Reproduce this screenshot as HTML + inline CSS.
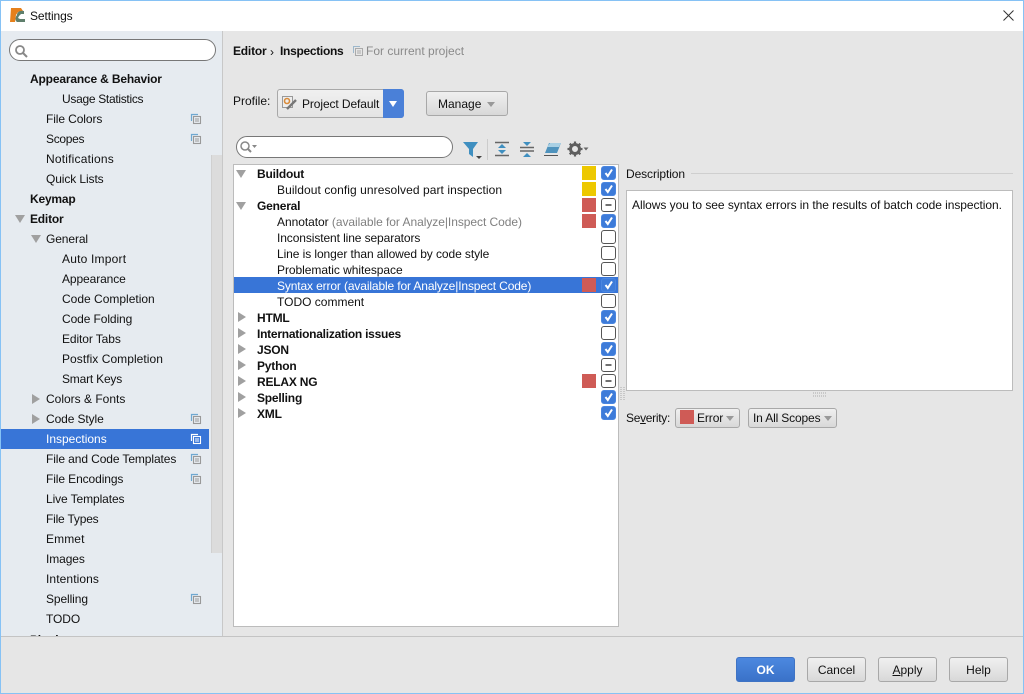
<!DOCTYPE html>
<html><head><meta charset="utf-8"><style>
html,body{margin:0;padding:0}
body{width:1024px;height:694px;position:relative;overflow:hidden;background:#e6e6e6;font-family:"Liberation Sans",sans-serif;font-size:12px;color:#111}
.a{position:absolute}
.t{position:absolute;white-space:nowrap;line-height:16px;height:16px;letter-spacing:-.1px}
.b{font-weight:bold;font-size:12px;letter-spacing:-.2px}
.s{position:absolute;width:14px;height:14px;left:582px}
.y{background:#edc800}.r{background:#cf5b56}
.c{position:absolute;left:601px;width:13px;height:12px;border:1px solid #555;border-radius:3px;background:#fff}
.c.on{background:#3d7bd9;border-color:#4a86e0}
.c svg{position:absolute;left:0;top:0}
.tri-d{position:absolute;width:0;height:0;border-left:5px solid transparent;border-right:5px solid transparent;border-top:8px solid #a0a0a0}
.tri-r{position:absolute;width:0;height:0;border-top:5px solid transparent;border-bottom:5px solid transparent;border-left:8px solid #a0a0a0}
.btn{position:absolute;box-sizing:border-box;border:1px solid #a8a8a8;border-radius:3px;background:linear-gradient(#f0f0f0,#d8d8d8);text-align:center;line-height:24px;color:#111}
.dd{position:absolute;width:0;height:0;border-left:4px solid transparent;border-right:4px solid transparent;border-top:5px solid #999}
u{text-decoration:underline}
</style></head><body>
<svg width="0" height="0" style="position:absolute"><defs>
<g id="cp"><path d="M1.500 8V1.500H8" fill="none" stroke="#6fa8d0" stroke-width="1.200"/><rect x="3.500" y="3.500" width="7" height="7" fill="#e6ebf0" stroke="#999" stroke-width="1.100"/><path d="M5 6h4M5 8h4" stroke="#999"/></g>
<path id="ck" d="M3.500 6L5.800 9L10 2.500" fill="none" stroke="#fff" stroke-width="2"/>
<path id="mn" d="M3.500 6H9.500" stroke="#111" stroke-width="1.200"/>
</defs></svg>

<!-- title bar -->
<div class="a" style="left:0;top:0;width:1024px;height:31px;background:#fff"></div>
<svg class="a" style="left:9px;top:7px" width="17" height="17" viewBox="0 0 17 17"><path d="M2 1h10l2 3-5 1-2 3-1 7H1z" fill="#e5801c"/><path d="M8 8c0-3 3-5 7-4v3h-3l-2 2-1 2 2 1h5v3H8c-2-1-2-5 0-7z" fill="#5f7f6c"/></svg>
<div class="t" style="left:30px;top:8px">Settings</div>
<svg class="a" style="left:1002px;top:9px" width="13" height="13"><path d="M1.500 1.500L11.500 11.500M11.500 1.500L1.500 11.500" stroke="#333" stroke-width="1"/></svg>

<!-- sidebar -->
<div class="a" style="left:1px;top:31px;width:221px;height:605px;background:#e6ebf0;overflow:hidden">
<div class="a" style="left:0;top:398px;width:208px;height:20px;background:#3875d7"></div>
<div class="a" style="left:210px;top:124px;width:10px;height:398px;background:#dcdcdc;border-left:1px solid #d0d0d0"></div>
<div class="t b" style="left:29px;top:601px">Plugins</div>
</div>
<div class="a" style="left:222px;top:31px;width:1px;height:605px;background:#c8c8c8"></div>
<div class="a" style="left:9px;top:39px;width:205px;height:20px;background:#fff;border:1px solid #777;border-radius:11px"></div>
<svg class="a" style="left:14px;top:44px" width="15" height="15"><circle cx="6" cy="6" r="4" fill="none" stroke="#888" stroke-width="1.800"/><path d="M9 9l4 4" stroke="#888" stroke-width="2"/></svg>

<div class="t b" style="left:30px;top:71px;letter-spacing:-.17px">Appearance &amp; Behavior</div>
<div class="t" style="left:62px;top:91px;letter-spacing:-.3px">Usage Statistics</div>
<div class="t" style="left:46px;top:111px">File Colors</div>
<div class="t" style="left:46px;top:131px;letter-spacing:-.3px">Scopes</div>
<div class="t" style="left:46px;top:151px;letter-spacing:.2px">Notifications</div>
<div class="t" style="left:46px;top:171px">Quick Lists</div>
<div class="t b" style="left:30px;top:191px">Keymap</div>
<div class="t b" style="left:30px;top:211px">Editor</div>
<div class="t" style="left:46px;top:231px">General</div>
<div class="t" style="left:62px;top:251px;letter-spacing:.2px">Auto Import</div>
<div class="t" style="left:62px;top:271px">Appearance</div>
<div class="t" style="left:62px;top:291px;letter-spacing:0">Code Completion</div>
<div class="t" style="left:62px;top:311px">Code Folding</div>
<div class="t" style="left:62px;top:331px">Editor Tabs</div>
<div class="t" style="left:62px;top:351px;letter-spacing:.05px">Postfix Completion</div>
<div class="t" style="left:62px;top:371px;letter-spacing:-.2px">Smart Keys</div>
<div class="t" style="left:46px;top:391px;letter-spacing:0">Colors &amp; Fonts</div>
<div class="t" style="left:46px;top:411px">Code Style</div>
<div class="t" style="left:46px;top:431px;color:#fff;letter-spacing:0">Inspections</div>
<div class="t" style="left:46px;top:451px">File and Code Templates</div>
<div class="t" style="left:46px;top:471px">File Encodings</div>
<div class="t" style="left:46px;top:491px">Live Templates</div>
<div class="t" style="left:46px;top:511px;letter-spacing:-.2px">File Types</div>
<div class="t" style="left:46px;top:531px;letter-spacing:.1px">Emmet</div>
<div class="t" style="left:46px;top:551px">Images</div>
<div class="t" style="left:46px;top:571px;letter-spacing:.1px">Intentions</div>
<div class="t" style="left:46px;top:591px">Spelling</div>
<div class="t" style="left:46px;top:611px">TODO</div>
<div class="tri-d" style="left:15px;top:215px"></div>
<div class="tri-d" style="left:31px;top:235px"></div>
<div class="tri-r" style="left:32px;top:394px"></div>
<div class="tri-r" style="left:32px;top:414px"></div>
<svg class="a" style="left:190px;top:113px" width="12" height="12"><use href="#cp"/></svg>
<svg class="a" style="left:190px;top:133px" width="12" height="12"><use href="#cp"/></svg>
<svg class="a" style="left:190px;top:413px" width="12" height="12"><use href="#cp"/></svg>
<svg class="a" style="left:190px;top:433px" width="12" height="12"><path d="M1.500 8V1.500H8" fill="none" stroke="#fff" stroke-width="1.200"/><rect x="3.500" y="3.500" width="7" height="7" fill="#3875d7" stroke="#fff" stroke-width="1.100"/><path d="M5 6h4M5 8h4" stroke="#fff"/></svg>
<svg class="a" style="left:190px;top:453px" width="12" height="12"><use href="#cp"/></svg>
<svg class="a" style="left:190px;top:473px" width="12" height="12"><use href="#cp"/></svg>
<svg class="a" style="left:190px;top:593px" width="12" height="12"><use href="#cp"/></svg>

<!-- header -->
<div class="t b" style="left:233px;top:43px">Editor</div>
<div class="t" style="left:270px;top:44px">›</div>
<div class="t b" style="left:280px;top:43px;letter-spacing:-.3px">Inspections</div>
<svg class="a" style="left:352px;top:45px" width="12" height="12"><path d="M1.500 8V1.500H8" fill="none" stroke="#9db8cc" stroke-width="1"/><rect x="3.500" y="3.500" width="7" height="7" fill="none" stroke="#aaa"/><path d="M5 6h4M5 8h4" stroke="#aaa"/></svg>
<div class="t" style="left:366px;top:43px;color:#8a8a8a;letter-spacing:0">For current project</div>

<!-- profile -->
<div class="t" style="left:233px;top:93px;letter-spacing:0">Profile:</div>
<div class="a" style="left:277px;top:89px;width:125px;height:27px;background:linear-gradient(#f0f0f0,#e4e4e4);border:1px solid #a8a8a8;border-radius:3px"></div>
<div class="a" style="left:383px;top:89px;width:21px;height:29px;background:#4a80d8;border-radius:0 3px 3px 0"></div>
<div class="a" style="left:389px;top:101px;width:0;height:0;border-left:4.500px solid transparent;border-right:4.500px solid transparent;border-top:6px solid #fff"></div>
<svg class="a" style="left:281px;top:95px" width="17" height="16"><rect x="1.500" y="1.500" width="10" height="11" fill="#eee" stroke="#999"/><circle cx="6" cy="6" r="2.500" fill="none" stroke="#d98b3a" stroke-width="1.600"/><path d="M6 14l6-6 3-3" stroke="#777" stroke-width="2.400" fill="none"/></svg>
<div class="t" style="left:302px;top:96px">Project Default</div>
<div class="btn" style="left:426px;top:91px;width:82px;height:25px;text-align:left;padding-left:11px">Manage</div>
<div class="dd" style="left:487px;top:102px"></div>

<!-- search -->
<div class="a" style="left:236px;top:136px;width:215px;height:20px;background:#fff;border:1px solid #777;border-radius:11px"></div>
<svg class="a" style="left:239px;top:140px" width="20" height="14"><circle cx="6" cy="6" r="4" fill="none" stroke="#888" stroke-width="1.500"/><path d="M9 9l3 3" stroke="#888" stroke-width="2"/><path d="M13 5h5l-2.500 3z" fill="#888"/></svg>

<!-- toolbar -->
<svg class="a" style="left:463px;top:141px" width="20" height="20"><path d="M0 1h15l-5 7v8l-4-3V8z" fill="#3f8fc0"/><path d="M13 15h6l-3 3z" fill="#444"/></svg>
<div class="a" style="left:487px;top:139px;width:1px;height:21px;background:#ccc"></div>
<svg class="a" style="left:495px;top:141px" width="14" height="17"><path d="M0 1.500h14M0 14.500h14" stroke="#666" stroke-width="1.600"/><path d="M7 3l4 4H3zM7 13l4-4H3z" fill="#3f8fc0"/></svg>
<svg class="a" style="left:520px;top:141px" width="14" height="17"><path d="M0 6.500h14M0 10h14" stroke="#666" stroke-width="1.500"/><path d="M3 1h8l-4 4zM3 16h8l-4-4z" fill="#3f8fc0"/></svg>
<svg class="a" style="left:544px;top:141px" width="17" height="17"><path d="M5 2h12l-4 10H1z" fill="#4f93bd"/><path d="M6 2h11l-2 4H3z" fill="#a9d0e4"/><path d="M0 14.500h14" stroke="#555"/></svg>
<svg class="a" style="left:567px;top:140px" width="22" height="18" viewBox="0 0 22 18"><circle cx="8" cy="9" r="4.500" fill="none" stroke="#5f5f5f" stroke-width="3"/><path d="M8 1.500v3M8 13.500v3M.5 9h3M12.500 9h3M2.700 3.700l2 2M11.300 12.300l2 2M13.300 3.700l-2 2M4.700 12.300l-2 2" stroke="#5f5f5f" stroke-width="2.200"/><path d="M16.500 7.500h5l-2.500 3z" fill="#666"/></svg>

<!-- inspections panel -->
<div class="a" style="left:233px;top:164px;width:384px;height:461px;background:#fff;border:1px solid #bcbcbc"></div>
<div class="a" style="left:234px;top:277px;width:384px;height:16px;background:#3875d7"></div>

<div class="t b" style="left:257px;top:166px">Buildout</div>
<div class="t" style="left:277px;top:182px;letter-spacing:.07px">Buildout config unresolved part inspection</div>
<div class="t b" style="left:257px;top:198px">General</div>
<div class="t" style="left:277px;top:214px;letter-spacing:-.05px">Annotator <span style="color:#808080">(available for Analyze|Inspect Code)</span></div>
<div class="t" style="left:277px;top:230px">Inconsistent line separators</div>
<div class="t" style="left:277px;top:246px;letter-spacing:-.08px">Line is longer than allowed by code style</div>
<div class="t" style="left:277px;top:262px;letter-spacing:-.05px">Problematic whitespace</div>
<div class="t" style="left:277px;top:278px;color:#fff;letter-spacing:-.13px">Syntax error (available for Analyze|Inspect Code)</div>
<div class="t" style="left:277px;top:294px;letter-spacing:0">TODO comment</div>
<div class="t b" style="left:257px;top:310px">HTML</div>
<div class="t b" style="left:257px;top:326px;letter-spacing:-.25px">Internationalization issues</div>
<div class="t b" style="left:257px;top:342px">JSON</div>
<div class="t b" style="left:257px;top:358px">Python</div>
<div class="t b" style="left:257px;top:374px">RELAX NG</div>
<div class="t b" style="left:257px;top:390px">Spelling</div>
<div class="t b" style="left:257px;top:406px">XML</div>

<div class="tri-d" style="left:236px;top:170px"></div>
<div class="tri-d" style="left:236px;top:202px"></div>
<div class="tri-r" style="left:238px;top:312px"></div>
<div class="tri-r" style="left:238px;top:328px"></div>
<div class="tri-r" style="left:238px;top:344px"></div>
<div class="tri-r" style="left:238px;top:360px"></div>
<div class="tri-r" style="left:238px;top:376px"></div>
<div class="tri-r" style="left:238px;top:392px"></div>
<div class="tri-r" style="left:238px;top:408px"></div>

<div class="s y" style="top:166px"></div>
<div class="s y" style="top:182px"></div>
<div class="s r" style="top:198px"></div>
<div class="s r" style="top:214px"></div>
<div class="s r" style="top:278px"></div>
<div class="s r" style="top:374px"></div>

<div class="c on" style="top:166px"><svg width="13" height="12"><use href="#ck"/></svg></div>
<div class="c on" style="top:182px"><svg width="13" height="12"><use href="#ck"/></svg></div>
<div class="c" style="top:198px"><svg width="13" height="12"><use href="#mn"/></svg></div>
<div class="c on" style="top:214px"><svg width="13" height="12"><use href="#ck"/></svg></div>
<div class="c" style="top:230px"></div>
<div class="c" style="top:246px"></div>
<div class="c" style="top:262px"></div>
<div class="c on" style="top:278px"><svg width="13" height="12"><use href="#ck"/></svg></div>
<div class="c" style="top:294px"></div>
<div class="c on" style="top:310px"><svg width="13" height="12"><use href="#ck"/></svg></div>
<div class="c" style="top:326px"></div>
<div class="c on" style="top:342px"><svg width="13" height="12"><use href="#ck"/></svg></div>
<div class="c" style="top:358px"><svg width="13" height="12"><use href="#mn"/></svg></div>
<div class="c" style="top:374px"><svg width="13" height="12"><use href="#mn"/></svg></div>
<div class="c on" style="top:390px"><svg width="13" height="12"><use href="#ck"/></svg></div>
<div class="c on" style="top:406px"><svg width="13" height="12"><use href="#ck"/></svg></div>

<!-- description -->
<div class="t" style="left:626px;top:166px">Description</div>
<div class="a" style="left:691px;top:173px;width:322px;height:1px;background:#cfcfcf"></div>
<div class="a" style="left:626px;top:190px;width:385px;height:199px;background:#fff;border:1px solid #bcbcbc"></div>
<div class="t" style="left:632px;top:197px;letter-spacing:-.05px">Allows you to see syntax errors in the results of batch code inspection.</div>
<svg class="a" style="left:812px;top:392px" width="16" height="5"><path d="M1 1h14M1 4h14" stroke="#aaa" stroke-dasharray="1 1"/></svg>
<svg class="a" style="left:620px;top:386px" width="5" height="16"><path d="M1 1v14M4 1v14" stroke="#aaa" stroke-dasharray="1 1"/></svg>

<!-- severity -->
<div class="t" style="left:626px;top:410px;letter-spacing:-.3px">Se<u>v</u>erity:</div>
<div class="btn" style="left:675px;top:408px;width:65px;height:20px"></div>
<div class="a" style="left:680px;top:410px;width:14px;height:14px;background:#cf5b56"></div>
<div class="t" style="left:697px;top:410px">Error</div>
<div class="dd" style="left:726px;top:416px"></div>
<div class="btn" style="left:748px;top:408px;width:89px;height:20px"></div>
<div class="t" style="left:753px;top:410px;letter-spacing:-.15px">In All Scopes</div>
<div class="dd" style="left:824px;top:416px"></div>

<!-- bottom -->
<div class="a" style="left:1px;top:636px;width:1022px;height:1px;background:#c4c4c4"></div>
<div class="btn" style="left:736px;top:657px;width:59px;height:25px;background:linear-gradient(#4c88e0,#3a72c8);border-color:#3f73c4;color:#fff;font-weight:bold">OK</div>
<div class="btn" style="left:807px;top:657px;width:59px;height:25px">Cancel</div>
<div class="btn" style="left:878px;top:657px;width:59px;height:25px"><u>A</u>pply</div>
<div class="btn" style="left:949px;top:657px;width:59px;height:25px">Help</div>

<!-- window border -->
<div class="a" style="left:0;top:0;width:1022px;height:692px;border:1px solid #86c2f5"></div>
</body></html>
